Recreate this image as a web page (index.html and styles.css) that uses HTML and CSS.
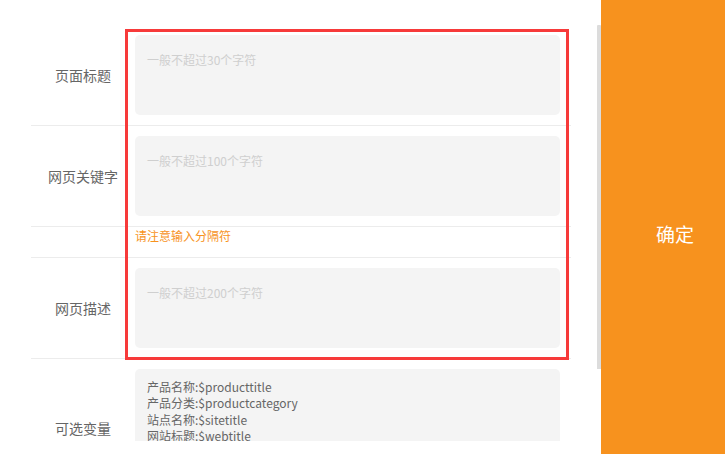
FILE: index.html
```html
<!DOCTYPE html>
<html lang="zh-CN">
<head>
  <meta charset="UTF-8" />
  <title>SEO设置</title>
  <link rel="stylesheet" href="styles.css">
</head>
<body>

  <!-- 表单区域 -->
  <div class="main">
    <div class="scroll">
      <form class="seo-form">
        <div class="row">
          <label class="label">页面标题</label>
          <textarea class="field" placeholder="一般不超过30个字符"></textarea>
        </div>
        <div class="row">
          <label class="label">网页关键字</label>
          <textarea class="field" placeholder="一般不超过100个字符"></textarea>
        </div>
        <div class="row hint-row">
          <span class="hint">请注意输入分隔符</span>
        </div>
        <div class="row">
          <label class="label">网页描述</label>
          <textarea class="field" placeholder="一般不超过200个字符"></textarea>
        </div>
        <div class="row">
          <label class="label">可选变量</label>
          <div class="field vars">
            <p>产品名称:$producttitle</p>
            <p>产品分类:$productcategory</p>
            <p>站点名称:$sitetitle</p>
            <p>网站标题:$webtitle</p>
          </div>
        </div>
      </form>
      <!-- 滚动条 -->
      <div class="thumb"></div>
    </div>
  </div>

  <!-- 确定按钮 -->
  <button class="confirm" type="button">确定</button>

  <!-- 标注框 -->
  <div class="mark"></div>
</body>
</html>
```

FILE: styles.css
```css
body {
  font-family: "Noto Sans CJK SC", "Noto Sans", sans-serif;
  background: #fff;
  margin: 0;
  display: flex;
  height: 454px;
  overflow: hidden;
}

.main {
  width: 601px;
  padding-top: 25px;
}

.scroll {
  position: relative;
  height: 416px;
  overflow: hidden;
}

.thumb {
  position: absolute;
  top: 0;
  right: 0;
  width: 4px;
  height: 344px;
  background: #dcdcdc;
  border-radius: 1px 1px 0 0;
}

.seo-form {
  margin-left: 31px;
  width: 540px;
  padding-bottom: 30px;
}

.row {
  display: flex;
  align-items: center;
  padding: 10px 0;
  border-bottom: 1px solid #ececec;
}

.label {
  width: 104px;
  text-align: center;
  font-size: 14px;
  color: #666;
}

.field {
  box-sizing: border-box;
  width: 425px;
  height: 80px;
  background: #f4f4f4;
  border: none;
  border-radius: 5px;
  padding: 17px 12px 0;
  font-family: inherit;
  font-size: 12px;
  line-height: 15px;
  color: #666;
  resize: none;
  outline: none;
}

.field::placeholder {
  color: #cfcfcf;
}

.vars {
  height: 118px;
  padding-top: 10px;
}

.vars p {
  margin: 0;
  height: 16.3px;
  line-height: 15px;
}

.hint-row {
  padding: 0;
  height: 30px;
  align-items: flex-start;
}

.hint {
  margin-left: 104px;
  font-size: 12px;
  line-height: 18px;
  color: #f7931e;
}

.confirm {
  flex: 1;
  border: none;
  background: #f7921e;
  color: #fff;
  font-family: inherit;
  font-size: 19px;
  padding: 12px 0 0 24px;
}

.mark {
  position: absolute;
  left: 125px;
  top: 29px;
  width: 444px;
  height: 331px;
  box-sizing: border-box;
  border: 3px solid #f73a3a;
}
```
